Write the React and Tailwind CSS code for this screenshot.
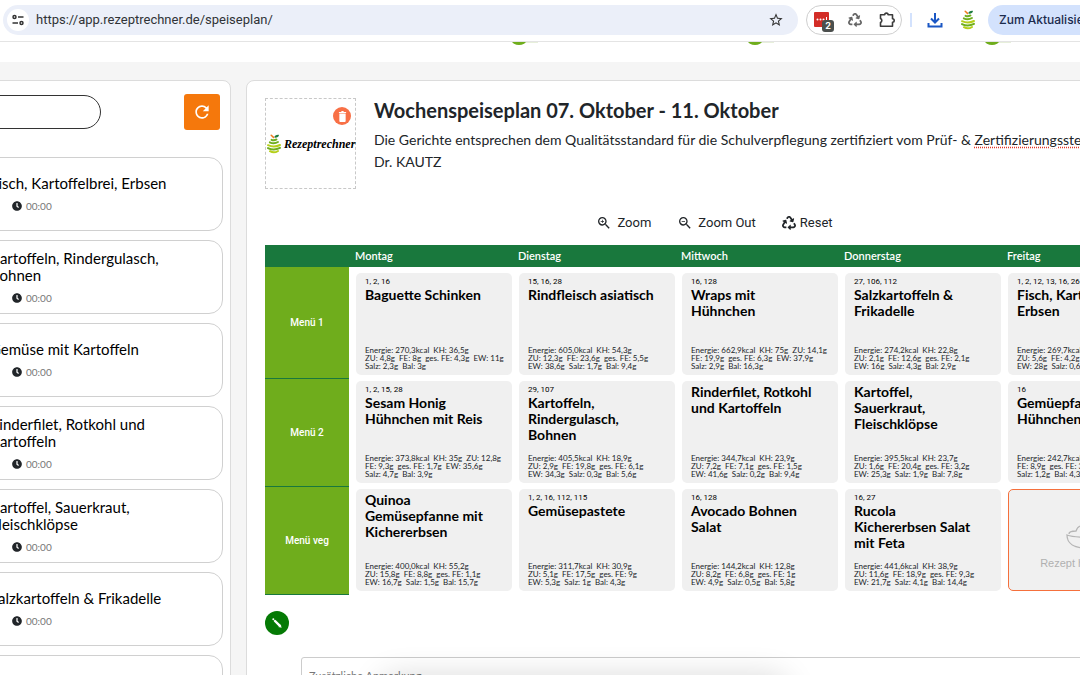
import { MdRefresh, MdZoomIn, MdZoomOut, MdStarOutline } from 'react-icons/md';
import { FaClock, FaRecycle } from 'react-icons/fa';

const recipes = [
  'Fisch, Kartoffelbrei, Erbsen',
  'Kartoffeln, Rindergulasch, Bohnen',
  'Gemüse mit Kartoffeln',
  'Rinderfilet, Rotkohl und Kartoffeln',
  'Kartoffel, Sauerkraut, Fleischklöpse',
  'Salzkartoffeln & Frikadelle',
  'Baguette Schinken',
];

const days = ['Montag', 'Dienstag', 'Mittwoch', 'Donnerstag', 'Freitag'];

const menus = [
  {
    name: 'Menü 1',
    meals: [
      {
        codes: '1, 2, 16',
        title: 'Baguette Schinken',
        facts: ['Energie: 270,3kcal  KH: 36,5g', 'ZU: 4,8g  FE: 8g  ges. FE: 4,3g  EW: 11g', 'Salz: 2,3g  Bal: 3g'],
      },
      {
        codes: '15, 16, 28',
        title: 'Rindfleisch asiatisch',
        facts: ['Energie: 605,0kcal  KH: 54,3g', 'ZU: 12,3g  FE: 23,6g  ges. FE: 5,5g', 'EW: 38,6g  Salz: 1,7g  Bal: 9,4g'],
      },
      {
        codes: '16, 128',
        title: 'Wraps mit Hühnchen',
        facts: ['Energie: 662,9kcal  KH: 75g  ZU: 14,1g', 'FE: 19,9g  ges. FE: 6,3g  EW: 37,9g', 'Salz: 2,9g  Bal: 16,3g'],
      },
      {
        codes: '27, 106, 112',
        title: 'Salzkartoffeln & Frikadelle',
        facts: ['Energie: 274,2kcal  KH: 22,8g', 'ZU: 2,1g  FE: 12,6g  ges. FE: 2,1g', 'EW: 16g  Salz: 4,3g  Bal: 2,9g'],
      },
      {
        codes: '1, 2, 12, 13, 16, 26',
        title: 'Fisch, Kartoffelbrei, Erbsen',
        facts: ['Energie: 269,7kcal  KH: 23,1g', 'ZU: 5,6g  FE: 4,2g  ges. FE: 1,9g', 'EW: 28g  Salz: 0,6g  Bal: 5,2g'],
      },
    ],
  },
  {
    name: 'Menü 2',
    meals: [
      {
        codes: '1, 2, 15, 28',
        title: 'Sesam Honig Hühnchen mit Reis',
        facts: ['Energie: 373,8kcal  KH: 35g  ZU: 12,8g', 'FE: 9,3g  ges. FE: 1,7g  EW: 35,6g', 'Salz: 4,7g  Bal: 3,9g'],
      },
      {
        codes: '29, 107',
        title: 'Kartoffeln, Rindergulasch, Bohnen',
        facts: ['Energie: 405,5kcal  KH: 18,9g', 'ZU: 2,9g  FE: 19,8g  ges. FE: 6,1g', 'EW: 34,3g  Salz: 0,3g  Bal: 5,6g'],
      },
      {
        title: 'Rinderfilet, Rotkohl und Kartoffeln',
        facts: ['Energie: 344,7kcal  KH: 23,9g', 'ZU: 7,2g  FE: 7,1g  ges. FE: 1,5g', 'EW: 41,6g  Salz: 0,2g  Bal: 9,4g'],
      },
      {
        title: 'Kartoffel, Sauerkraut, Fleischklöpse',
        facts: ['Energie: 395,5kcal  KH: 23,7g', 'ZU: 1,6g  FE: 20,4g  ges. FE: 3,2g', 'EW: 25,3g  Salz: 1,9g  Bal: 7,8g'],
      },
      {
        codes: '16',
        title: 'Gemüepfanne mit Hühnchen',
        facts: ['Energie: 242,7kcal  KH: 9g  ZU: 7,1g', 'FE: 8,9g  ges. FE: 3,4g  EW: 29,8g', 'Salz: 1,2g  Bal: 4,3g'],
      },
    ],
  },
  {
    name: 'Menü veg',
    meals: [
      {
        title: 'Quinoa Gemüsepfanne mit Kichererbsen',
        facts: ['Energie: 400,0kcal  KH: 55,2g', 'ZU: 15,8g  FE: 8,8g  ges. FE: 1,1g', 'EW: 16,7g  Salz: 1,5g  Bal: 15,7g'],
      },
      {
        codes: '1, 2, 16, 112, 115',
        title: 'Gemüsepastete',
        facts: ['Energie: 311,7kcal  KH: 30,9g', 'ZU: 5,1g  FE: 17,5g  ges. FE: 9g', 'EW: 5,3g  Salz: 1g  Bal: 4,3g'],
      },
      {
        codes: '16, 128',
        title: 'Avocado Bohnen Salat',
        facts: ['Energie: 144,2kcal  KH: 12,8g', 'ZU: 8,2g  FE: 6,8g  ges. FE: 1g', 'EW: 4,9g  Salz: 0,5g  Bal: 5,8g'],
      },
      {
        codes: '16, 27',
        title: 'Rucola Kichererbsen Salat mit Feta',
        facts: ['Energie: 441,6kcal  KH: 38,9g', 'ZU: 11,6g  FE: 18,9g  ges. FE: 9,3g', 'EW: 21,7g  Salz: 4,1g  Bal: 14,4g'],
      },
      null,
    ],
  },
];

function PearLogo({ className }) {
  return (
    <svg viewBox="0 0 16 20" className={className} fill="none" strokeLinecap="round" aria-hidden="true">
      <path d="M8.2 3.6C8.6 1.6 10.4.6 13 .9 12.6 3 10.8 4 8.2 3.6Z" fill="#1c7a3e" />
      <path d="M5.2 1.2 7.5 3.4" stroke="#f07a1c" strokeWidth="1.5" />
      <path d="M5.5 5.8Q8 7 10.5 5.4" stroke="#6fae1e" strokeWidth="1.9" />
      <path d="M3.8 8.3Q8 10.4 12 8" stroke="#6fae1e" strokeWidth="1.9" />
      <path d="M2 11.2Q8 14 14 11" stroke="#b5cf1a" strokeWidth="2" />
      <path d="M2 14.1Q8 17 14 13.9" stroke="#6fae1e" strokeWidth="2" />
      <path d="M4 17.2Q8 19.6 12 17" stroke="#b5cf1a" strokeWidth="2" />
    </svg>
  );
}

function BrowserBar() {
  return (
    <header className="flex h-[42px] shrink-0 items-center border-b border-[#e4e4e4] bg-white pb-[2px] font-['Inter',sans-serif]">
      <div className="ml-[3px] flex h-[30px] flex-1 items-center rounded-full bg-[#ebeff9] pl-1 pr-[14px]">
        <button aria-label="Websiteinformationen" className="flex size-[22px] items-center justify-center rounded-full bg-white">
          <svg viewBox="0 0 12 12" className="size-3" fill="none" stroke="#333" strokeWidth="1.5">
            <circle cx="2.5" cy="3" r="1.5" />
            <path d="M6 3h5.5M.5 9H6" />
            <circle cx="9.5" cy="9" r="1.5" />
          </svg>
        </button>
        <input
          aria-label="Adresse"
          className="ml-[7px] min-w-0 flex-1 bg-transparent font-['Roboto',sans-serif] text-[13px] text-[#303337] outline-none"
          defaultValue="https://app.rezeptrechner.de/speiseplan/"
        />
        <button aria-label="Lesezeichen">
          <MdStarOutline className="size-4 text-[#333]" />
        </button>
      </div>
      <div className="ml-2 flex h-[30px] w-24 shrink-0 items-center justify-between rounded-full border border-[#cfcfcf] px-[6px]">
        <button aria-label="Passwortmanager" className="relative flex h-4 w-[18px] items-center justify-center">
          <svg viewBox="0 0 16 15" className="h-[15px] w-4">
            <rect width="15" height="15" rx="1" fill="#d32d27" />
            <circle cx="3.5" cy="7.5" r="1" fill="#fff" />
            <circle cx="6.5" cy="7.5" r="1" fill="#fff" />
            <circle cx="9.5" cy="7.5" r="1" fill="#fff" />
            <path d="M12.5 5v5" stroke="#fff" />
          </svg>
          <span className="absolute -bottom-1 -right-[3px] flex size-3 items-center justify-center rounded-[3px] bg-[#4b4f4d] text-[9px] font-bold text-white">
            2
          </span>
        </button>
        <button aria-label="Recycling">
          <FaRecycle className="size-[14px] text-[#666]" />
        </button>
        <button aria-label="Erweiterungen">
          <svg viewBox="0 0 16 16" className="size-4" fill="none" stroke="#3c3c3c" strokeWidth="1.6" strokeLinejoin="round">
            <path d="M1.5 2.8h4.2a1.7 1.7 0 0 1 3.4 0h4.4v4a1.7 1.7 0 0 1 0 3.4v4h-12v-3.8a2.1 2.1 0 0 0 0-3.9Z" />
          </svg>
        </button>
      </div>
      <span className="ml-2 h-[14px] w-[2px] bg-[#d3e2fd]" />
      <button aria-label="Downloads" className="ml-[15px]">
        <svg viewBox="0 0 16 16" className="size-4" fill="none" stroke="#1a57c4" strokeWidth="2">
          <path d="M8 1v9M4 6.5l4 4 4-4M1.5 11v3.5h13V11" />
        </svg>
      </button>
      <button aria-label="Rezeptrechner" className="ml-[17px]">
        <PearLogo className="h-5 w-4" />
      </button>
      <button className="ml-3 h-[30px] w-[92px] shrink-0 overflow-hidden whitespace-nowrap rounded-l-full bg-[#d3e2fd] pl-[11px] text-left text-xs font-medium text-[#1b2b4d]">
        Zum Aktualisieren
      </button>
    </header>
  );
}

function Steps() {
  return (
    <div className="h-5 shrink-0 overflow-hidden bg-white">
      <svg className="h-1 w-full" aria-hidden="true">
        <path d="M519 0h19M755 0h19M992 0h19" stroke="#cfe0b8" />
        <g fill="#6fad1c">
          <ellipse cx="519" cy="-1" rx="7" ry="4" />
          <ellipse cx="755" cy="-1" rx="7" ry="4" />
          <ellipse cx="992" cy="-1" rx="7" ry="4" />
        </g>
      </svg>
    </div>
  );
}

function RecipeCard({ title }) {
  return (
    <li className="flex h-[74px] flex-col justify-center rounded-[14px] border border-[#d0d0d0] px-10">
      <h3 className="text-[15px] leading-[17px] text-black">{title}</h3>
      <p className="mt-[7px] flex items-center gap-1 pl-[22px] text-[10px] leading-[14px] text-[#777]">
        <FaClock className="size-[10px] text-[#212529]" />
        00:00
      </p>
    </li>
  );
}

function Sidebar() {
  return (
    <aside className="-ml-[60px] w-[291px] shrink-0 rounded-lg border border-[#dcdcdc] bg-white pl-2 pr-[7px] pt-[13px]">
      <div className="flex items-center justify-between pr-[3px]">
        <input
          aria-label="Rezept suchen"
          className="h-[34px] w-[152px] rounded-full border border-[#333] px-4 text-sm outline-none"
        />
        <button aria-label="Aktualisieren" className="flex size-9 items-center justify-center rounded-[3px] bg-[#f5780c]">
          <MdRefresh className="size-5 text-white" />
        </button>
      </div>
      <ul className="mt-[27px] space-y-[9px]">
        {recipes.map((title) => (
          <RecipeCard key={title} title={title} />
        ))}
      </ul>
    </aside>
  );
}

function MealCard({ meal }) {
  return (
    <div className="flex h-[102px] flex-col rounded-[5px] bg-[#f0f0f0] px-[9px] pb-[5px] pt-[3px]">
      {meal.codes && <p className="font-['Roboto',sans-serif] text-[8px] leading-[11px] text-black">{meal.codes}</p>}
      <h3 className="pr-[11px] text-[14px] font-bold leading-4 text-black">{meal.title}</h3>
      <div className="mt-auto text-[8px] leading-[8px] text-[#212529]">
        {meal.facts.map((line) => (
          <p key={line} className="whitespace-pre">
            {line}
          </p>
        ))}
      </div>
    </div>
  );
}

function EmptyCard() {
  return (
    <button className="flex h-[102px] w-full flex-col items-center justify-center gap-1 rounded-[5px] border border-[#f5703c] bg-[#f0f0f0] pt-3 font-['Liberation_Sans',sans-serif] text-[11px] text-[#b0b0b0]">
      <svg viewBox="0 0 40 30" className="h-[30px] w-10" fill="none" stroke="#b5b5b5" strokeWidth="1.3">
        <path d="M1 14c0 9 8 13 19 13s19-4 19-13c-8 3-30 3-38 0Z" />
        <path d="M3 13c0-3 4-3 7-3 2-6 6-6 10-4 5-4 9-1 10 4 4 0 7 1 7 3" />
      </svg>
      Rezept hinzufügen
    </button>
  );
}

function PlanTable() {
  return (
    <table className="mt-3 w-full table-fixed border-collapse">
      <thead>
        <tr className="h-[22px] bg-[#19783d] text-left text-[11px] text-white">
          <th className="w-[84px]" aria-label="Menü" />
          {days.map((day) => (
            <th key={day} className="pl-[6px] font-semibold leading-[22px]">
              {day}
            </th>
          ))}
        </tr>
      </thead>
      <tbody>
        {menus.map((menu, row) => (
          <tr key={menu.name}>
            <th
              scope="row"
              className="border-b border-[#19783d] bg-[#6fad1c] text-center font-['Roboto',sans-serif] text-[10px] font-medium text-white"
            >
              {menu.name}
            </th>
            {menu.meals.map((meal, i) => (
              <td key={days[i]} className={row === 0 ? 'pb-[3px] pl-[7px] pt-[6px]' : 'py-[3px] pl-[7px]'}>
                {meal ? <MealCard meal={meal} /> : <EmptyCard />}
              </td>
            ))}
          </tr>
        ))}
      </tbody>
    </table>
  );
}

function Plan() {
  return (
    <main className="min-w-[937px] flex-1 rounded-lg border border-[#dcdcdc] bg-white px-[18px] pt-[17px]">
      <div className="flex gap-[18px]">
        <div className="relative flex size-[91px] shrink-0 items-center border border-dashed border-[#c8c8c8]">
          <PearLogo className="h-5 w-4 shrink-0" />
          <span className="ml-[2px] font-['Liberation_Serif',serif] text-[12px] font-bold italic text-black">Rezeptrechner</span>
          <button
            aria-label="Logo löschen"
            className="absolute right-1 top-2 flex size-[18px] items-center justify-center rounded-full bg-[#f87046]"
          >
            <svg viewBox="0 0 10 12" className="h-[11px] w-[9px]" fill="#fff">
              <path d="M1 1h2.5l.5-1h2l.5 1H9v1.200H1ZM1.5 2.8h7V11a1 1 0 0 1-1 1h-5a1 1 0 0 1-1-1Z" />
            </svg>
          </button>
        </div>
        <div className="pr-14 text-[#212529]">
          <h1 className="text-[20px] font-bold leading-6">Wochenspeiseplan 07. Oktober - 11. Oktober</h1>
          <p className="mt-[7px] text-[14px] leading-[22px]">
            Die Gerichte entsprechen dem Qualitätsstandard für die Schulverpflegung zertifiziert vom Prüf- &{' '}
            <span className="underline decoration-[#e0392b] decoration-dotted underline-offset-2">Zertifizierungsstelle</span>{' '}
            Dr. KAUTZ
          </p>
        </div>
      </div>

      <div className="mt-6 flex items-center justify-center gap-[26px] font-['Roboto',sans-serif] text-[13px] leading-5 text-[#212529]">
        <button className="flex items-center gap-[5px]">
          <MdZoomIn className="size-4" />
          Zoom
        </button>
        <button className="flex items-center gap-[5px]">
          <MdZoomOut className="size-4" />
          Zoom Out
        </button>
        <button className="flex items-center gap-1">
          <FaRecycle className="size-[14px]" />
          Reset
        </button>
      </div>

      <PlanTable />

      <button aria-label="Bearbeiten" className="mt-4 flex size-6 items-center justify-center rounded-full bg-[#057a05]">
        <svg viewBox="0 0 10 10" className="size-[10px]" stroke="#fff" fill="#fff" strokeLinecap="round">
          <path d="M1.3 1.3h.01" strokeWidth="2" />
          <path d="M3 3l4.7 4.7" strokeWidth="2.4" />
          <path d="M9.2 9.2 8.5 7 7 8.5Z" strokeWidth=".5" />
        </svg>
      </button>
      <textarea
        aria-label="Zusätzliche Anmerkung"
        placeholder="Zusätzliche Anmerkung"
        className="ml-9 mt-[22px] block h-24 w-[calc(100%-72px)] resize-none rounded-[3px] border border-[#ccc] px-[7px] pt-[10px] text-[11px] leading-4 outline-none placeholder:text-[#777]"
      />
    </main>
  );
}

export default function App() {
  return (
    <div className="relative flex h-screen flex-col overflow-hidden bg-[#f5f5f5] font-['Lato',sans-serif]">
      <BrowserBar />
      <Steps />
      <div className="mt-[18px] flex shrink-0 gap-[15px]">
        <Sidebar />
        <Plan />
      </div>
      <div className="pointer-events-none absolute -bottom-7 left-[36%] h-4 w-[36%] rounded-full shadow-[0_0_32px_10px_rgba(0,0,0,0.16)]" />
    </div>
  );
}
